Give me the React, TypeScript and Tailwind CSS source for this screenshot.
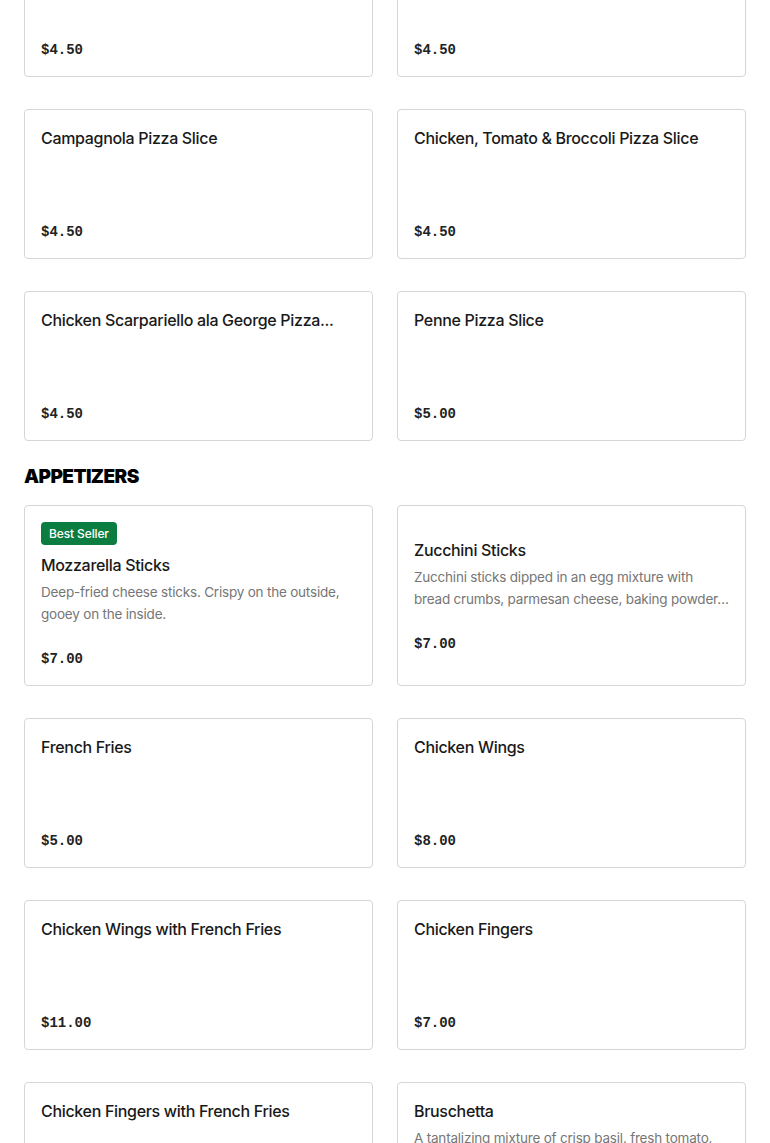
import React from "react";

type Item = { name: string; price: string; desc?: string[]; badge?: string };

const pizza: Item[] = [
  { name: "Grandma Pizza Slice", price: "$4.50" },
  { name: "Sicilian Pizza Slice", price: "$4.50" },
  { name: "Campagnola Pizza Slice", price: "$4.50" },
  { name: "Chicken, Tomato & Broccoli Pizza Slice", price: "$4.50" },
  { name: "Chicken Scarpariello ala George Pizza...", price: "$4.50" },
  { name: "Penne Pizza Slice", price: "$5.00" },
];

const appetizers: Item[] = [
  {
    name: "Mozzarella Sticks",
    price: "$7.00",
    badge: "Best Seller",
    desc: ["Deep-fried cheese sticks. Crispy on the outside,", "gooey on the inside."],
  },
  {
    name: "Zucchini Sticks",
    price: "$7.00",
    desc: [
      "Zucchini sticks dipped in an egg mixture with",
      "bread crumbs, parmesan cheese, baking powder, salt and spices.",
    ],
  },
  { name: "French Fries", price: "$5.00" },
  { name: "Chicken Wings", price: "$8.00" },
  { name: "Chicken Wings with French Fries", price: "$11.00" },
  { name: "Chicken Fingers", price: "$7.00" },
  { name: "Chicken Fingers with French Fries", price: "$7.00" },
  {
    name: "Bruschetta",
    price: "$7.00",
    desc: ["A tantalizing mixture of crisp basil, fresh tomato,", "garlic and olive oil on toasted bread."],
  },
];

function Card({ item }: { item: Item }) {
  return (
    <div className="flex min-h-[150px] flex-col justify-center rounded-[4px] border border-[#d6d6d6] bg-white p-4">
      {item.badge && (
        <div className="mb-2 flex">
          <span className="flex h-[23px] items-center rounded-[4px] bg-[#0b7d41] px-2 text-[12px] font-medium tracking-[-0.01em] text-white">
            {item.badge}
          </span>
        </div>
      )}
      <div className="truncate text-[16px] font-medium leading-6 tracking-[-0.02em] text-[#191919]">
        {item.name}
      </div>
      <div className="mt-1 h-[44px] overflow-hidden">
        {item.desc &&
          item.desc.map((line, i) => (
            <p
              key={i}
              className="truncate text-[13.5px] leading-[22px] tracking-[-0.015em] text-[#767676]"
            >
              {line}
            </p>
          ))}
      </div>
      <div
        className="mt-6 text-[14px] font-bold leading-5 text-[#222222]"
        style={{ fontFamily: '"Liberation Mono", monospace' }}
      >
        {item.price}
      </div>
    </div>
  );
}

export default function App() {
  return (
    <div
      className="h-[1143px] overflow-hidden bg-white px-6"
      style={{ fontFamily: 'Inter, "Noto Sans", sans-serif' }}
    >
      <div className="mt-[-73px] grid grid-cols-2 gap-x-6 gap-y-8">
        {pizza.map((it) => (
          <Card key={it.name} item={it} />
        ))}
      </div>
      <h2 className="mb-4 mt-6 text-[19px] font-black uppercase leading-6 tracking-[-0.03em] text-black">
        Appetizers
      </h2>
      <div className="grid grid-cols-2 gap-x-6 gap-y-8">
        {appetizers.map((it) => (
          <Card key={it.name} item={it} />
        ))}
      </div>
    </div>
  );
}
